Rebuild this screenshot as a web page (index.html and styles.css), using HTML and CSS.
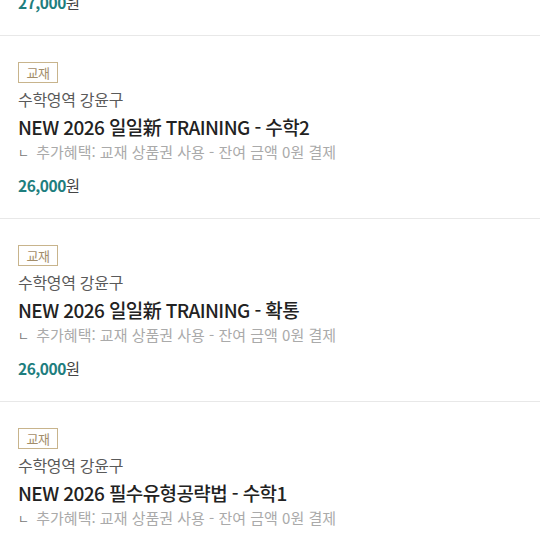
FILE: index.html
```html
<!DOCTYPE html>
<html lang="ko">
<head>
<meta charset="utf-8">
<link rel="stylesheet" href="styles.css">
</head>
<body>
<div class="list">
  <div class="item">
    <span class="badge">교재</span>
    <div class="sub">수학영역 강윤구</div>
    <div class="title">NEW 2026 일일新 TRAINING - 수학1</div>
    <div class="benefit"><span class="mark">ㄴ</span> 추가혜택: 교재 상품권 사용 - 잔여 금액 0원 결제</div>
    <div class="price"><b>27,000</b>원</div>
  </div>
  <div class="item">
    <span class="badge">교재</span>
    <div class="sub">수학영역 강윤구</div>
    <div class="title">NEW 2026 일일新 TRAINING - 수학2</div>
    <div class="benefit"><span class="mark">ㄴ</span> 추가혜택: 교재 상품권 사용 - 잔여 금액 0원 결제</div>
    <div class="price"><b>26,000</b>원</div>
  </div>
  <div class="item">
    <span class="badge">교재</span>
    <div class="sub">수학영역 강윤구</div>
    <div class="title">NEW 2026 일일新 TRAINING - 확통</div>
    <div class="benefit"><span class="mark">ㄴ</span> 추가혜택: 교재 상품권 사용 - 잔여 금액 0원 결제</div>
    <div class="price"><b>26,000</b>원</div>
  </div>
  <div class="item">
    <span class="badge">교재</span>
    <div class="sub">수학영역 강윤구</div>
    <div class="title">NEW 2026 필수유형공략법 - 수학1</div>
    <div class="benefit"><span class="mark">ㄴ</span> 추가혜택: 교재 상품권 사용 - 잔여 금액 0원 결제</div>
    <div class="price"><b>26,000</b>원</div>
  </div>
</div>
</body>
</html>
```
FILE: styles.css
```css
html, body {
  margin: 0;
  padding: 0;
  background: #fff;
  overflow: hidden;
}
body {
  font-family: "Noto Sans CJK KR", "Noto Sans", sans-serif;
  color: #222;
}
.list {
  margin-top: -147px;
}
.item {
  padding: 26px 18px 21px;
  border-bottom: 1px solid #e8e8e8;
  display: flex;
  flex-direction: column;
  align-items: flex-start;
}
.badge {
  box-sizing: border-box;
  height: 21px;
  width: 40px;
  border: 1px solid #c8b48c;
  color: #a38d69;
  font-size: 13px;
  line-height: 19px;
  text-align: center;
  letter-spacing: -0.5px;
}
.sub {
  margin-top: 4px;
  font-size: 16px;
  line-height: 24px;
  color: #5a5a5a;
  letter-spacing: -0.3px;
}
.title {
  margin-top: 2px;
  font-size: 19px;
  line-height: 28px;
  color: #222;
  font-weight: 500;
  letter-spacing: -0.6px;
}
.benefit {
  font-size: 15px;
  line-height: 22px;
  color: #aaa;
  letter-spacing: 0;
}
.benefit .mark {
  color: #777;
  font-size: 12px;
  margin-right: 3px;
}
.price {
  margin-top: 9px;
  font-size: 15.5px;
  line-height: 24px;
  color: #444;
  letter-spacing: -0.5px;
}
.price b {
  color: #1e7e7e;
  font-weight: 700;
}
```
